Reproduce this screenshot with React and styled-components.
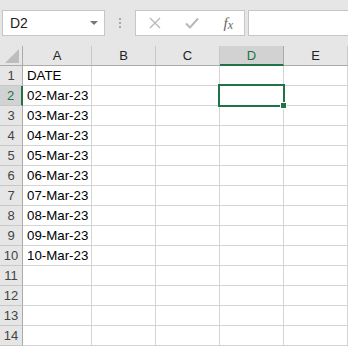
import React from "react";
import styled, { createGlobalStyle } from "styled-components";

const GlobalStyle = createGlobalStyle`
  html, body {
    margin: 0;
    padding: 0;
    background: #e6e6e6;
    font-family: "Liberation Sans", Arial, sans-serif;
    overflow: hidden;
  }
`;

const COLS = ["A", "B", "C", "D", "E"];
const WIDTHS = [69, 64, 64, 64, 64];
const DATES = [
  "DATE",
  "02-Mar-23",
  "03-Mar-23",
  "04-Mar-23",
  "05-Mar-23",
  "06-Mar-23",
  "07-Mar-23",
  "08-Mar-23",
  "09-Mar-23",
  "10-Mar-23",
];
const ROWS = 14;

const App = () => {
  return (
    <>
      <GlobalStyle />
      <Toolbar>
        <NameBox>
          <span>D2</span>
          <Caret />
        </NameBox>
        <Grip>
          <i />
          <i />
          <i />
        </Grip>
        <ButtonBox>
          <svg width="12" height="12" viewBox="0 0 12 12">
            <path d="M1 1 L11 11 M11 1 L1 11" stroke="#b9b9b9" strokeWidth="1.4" fill="none" />
          </svg>
          <svg width="14" height="12" viewBox="0 0 14 12">
            <path d="M1 6.5 L5 10.5 L13 1.5" stroke="#b9b9b9" strokeWidth="2" fill="none" />
          </svg>
          <Fx>
            f<span>x</span>
          </Fx>
        </ButtonBox>
        <FormulaInput />
      </Toolbar>

      <Sheet>
        <Corner>
          <svg width="14" height="14" viewBox="0 0 14 14">
            <path d="M14 0 L14 14 L0 14 Z" fill="#bdbdbd" />
          </svg>
        </Corner>
        {COLS.map((c) => (
          <ColHead key={c} $active={c === "D"}>
            {c}
          </ColHead>
        ))}

        {Array.from({ length: ROWS }, (_, i) => {
          const row = i + 1;
          return (
            <React.Fragment key={row}>
              <RowHead $active={row === 2}>{row}</RowHead>
              {COLS.map((c) => (
                <Cell key={c}>
                  {c === "A" && DATES[i] ? DATES[i] : null}
                  {c === "D" && row === 2 && (
                    <Selection>
                      <Handle />
                    </Selection>
                  )}
                </Cell>
              ))}
            </React.Fragment>
          );
        })}
      </Sheet>
    </>
  );
};

const Toolbar = styled.div`
  height: 46px;
  display: flex;
  align-items: flex-start;
  padding: 10px 0 0 2px;
  box-sizing: border-box;
`;

const NameBox = styled.div`
  width: 103px;
  height: 26px;
  box-sizing: border-box;
  background: #fff;
  border: 1px solid #c6c6c6;
  display: flex;
  align-items: center;
  justify-content: space-between;
  padding: 0 6px 0 7px;
  font-size: 14px;
  color: #222;
`;

const Caret = styled.span`
  width: 0;
  height: 0;
  border-left: 4px solid transparent;
  border-right: 4px solid transparent;
  border-top: 4px solid #777;
`;

const Grip = styled.div`
  width: 30px;
  height: 26px;
  display: flex;
  flex-direction: column;
  align-items: center;
  justify-content: center;
  gap: 2px;

  i {
    width: 2px;
    height: 2px;
    background: #a8a8a8;
  }
`;

const ButtonBox = styled.div`
  width: 110px;
  height: 26px;
  box-sizing: border-box;
  background: #fff;
  border: 1px solid #c6c6c6;
  display: flex;
  align-items: center;
  justify-content: space-between;
  padding: 0 11px 0 13px;
`;

const Fx = styled.span`
  font-family: "Liberation Serif", "Times New Roman", serif;
  font-style: italic;
  font-size: 15px;
  color: #666;
  line-height: 1;

  span {
    font-size: 12px;
    position: relative;
    top: 1px;
  }
`;

const FormulaInput = styled.div`
  flex: 1;
  margin-left: 3px;
  height: 26px;
  box-sizing: border-box;
  background: #fff;
  border: 1px solid #c6c6c6;
  border-right: none;
`;

const Sheet = styled.div`
  display: grid;
  grid-template-columns: 23px ${WIDTHS.map((w) => `${w}px`).join(" ")};
  grid-auto-rows: 20px;
  background: #fff;
`;

const Corner = styled.div`
  background: #e6e6e6;
  border-right: 1px solid #ababab;
  border-bottom: 1px solid #ababab;
  box-sizing: border-box;
  display: flex;
  align-items: flex-end;
  justify-content: flex-end;
  padding: 0 3px 2px 0;
`;

const ColHead = styled.div`
  box-sizing: border-box;
  background: ${(p) => (p.$active ? "#d2d2d2" : "#e6e6e6")};
  border-right: 1px solid ${(p) => (p.$active ? "#ababab" : "#c8c8c8")};
  border-bottom: ${(p) => (p.$active ? "2px solid #217346" : "1px solid #ababab")};
  display: flex;
  align-items: center;
  justify-content: center;
  font-size: 13px;
  color: ${(p) => (p.$active ? "#217346" : "#222")};
`;

const RowHead = styled.div`
  box-sizing: border-box;
  background: ${(p) => (p.$active ? "#d2d2d2" : "#e6e6e6")};
  border-right: ${(p) => (p.$active ? "2px solid #217346" : "1px solid #ababab")};
  border-bottom: 1px solid #c8c8c8;
  display: flex;
  align-items: center;
  justify-content: center;
  font-size: 13px;
  color: ${(p) => (p.$active ? "#217346" : "#444")};
`;

const Cell = styled.div`
  position: relative;
  box-sizing: border-box;
  border-right: 1px solid #d4d4d4;
  border-bottom: 1px solid #d4d4d4;
  padding: 0 0 0 4px;
  display: flex;
  align-items: center;
  font-size: 13.3px;
  color: #000;
  white-space: nowrap;
`;

const Selection = styled.div`
  position: absolute;
  left: -2px;
  top: -2px;
  width: 67px;
  height: 23px;
  box-sizing: border-box;
  border: 2px solid #217346;
  z-index: 2;
`;

const Handle = styled.div`
  position: absolute;
  right: -4px;
  bottom: -4px;
  width: 7px;
  height: 7px;
  box-sizing: border-box;
  background: #217346;
  border: 1px solid #fff;
`;

export default App;
